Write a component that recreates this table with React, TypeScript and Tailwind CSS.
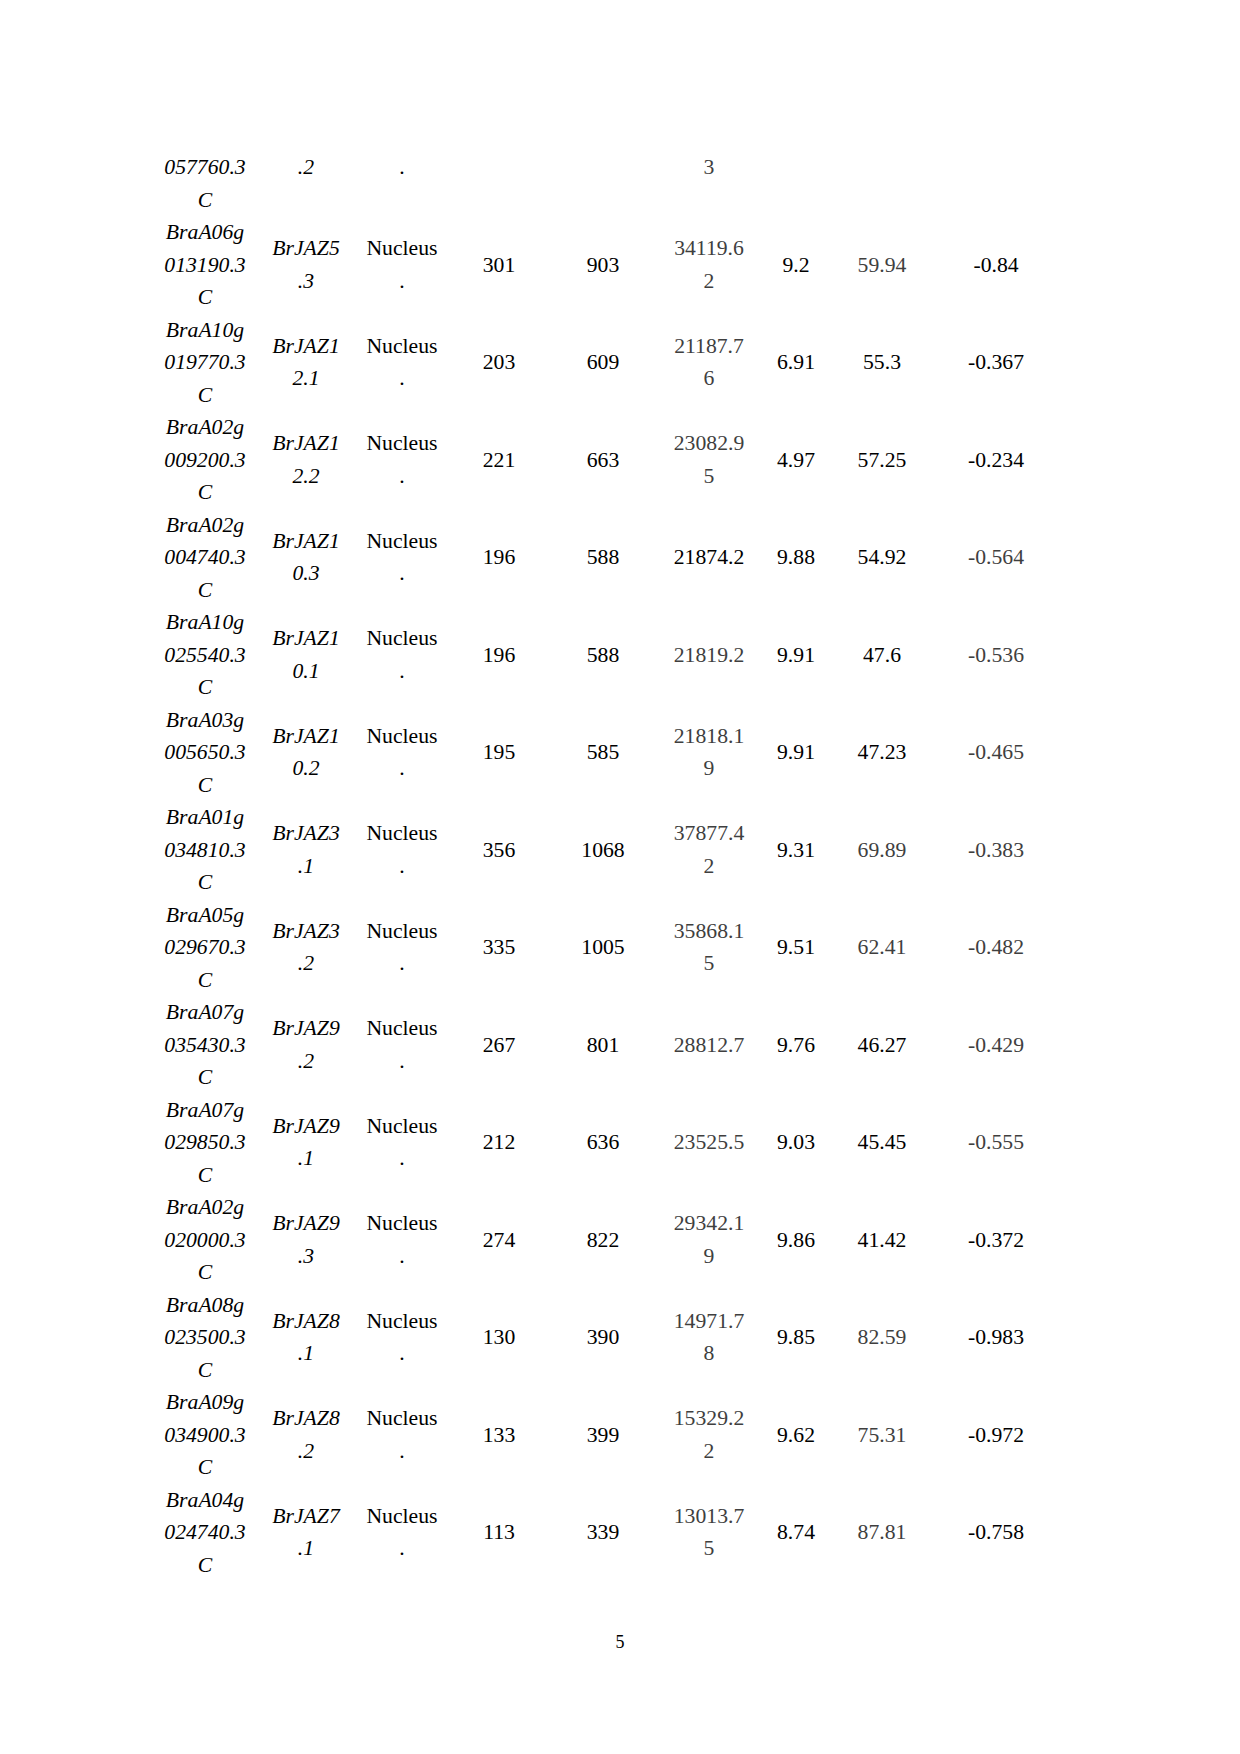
import React from 'react'

type Row = {
  id: string[]
  name: string[]
  loc: string[]
  aa: string[]
  cds: string[]
  mw: string[]
  pi: string[]
  ii: string[]
  gravy: string[]
  grayMw?: boolean
  grayIi?: boolean
  grayGravy?: boolean
}

const loc = ['Nucleus', '.']

const rows: Row[] = [
  { id: ['BraA06g', '013190.3', 'C'], name: ['BrJAZ5', '.3'], loc, aa: ['301'], cds: ['903'], mw: ['34119.6', '2'], pi: ['9.2'], ii: ['59.94'], gravy: ['-0.84'], grayMw: true, grayIi: true },
  { id: ['BraA10g', '019770.3', 'C'], name: ['BrJAZ1', '2.1'], loc, aa: ['203'], cds: ['609'], mw: ['21187.7', '6'], pi: ['6.91'], ii: ['55.3'], gravy: ['-0.367'], grayMw: true },
  { id: ['BraA02g', '009200.3', 'C'], name: ['BrJAZ1', '2.2'], loc, aa: ['221'], cds: ['663'], mw: ['23082.9', '5'], pi: ['4.97'], ii: ['57.25'], gravy: ['-0.234'], grayMw: true },
  { id: ['BraA02g', '004740.3', 'C'], name: ['BrJAZ1', '0.3'], loc, aa: ['196'], cds: ['588'], mw: ['21874.2'], pi: ['9.88'], ii: ['54.92'], gravy: ['-0.564'], grayGravy: true },
  { id: ['BraA10g', '025540.3', 'C'], name: ['BrJAZ1', '0.1'], loc, aa: ['196'], cds: ['588'], mw: ['21819.2'], pi: ['9.91'], ii: ['47.6'], gravy: ['-0.536'], grayMw: true, grayGravy: true },
  { id: ['BraA03g', '005650.3', 'C'], name: ['BrJAZ1', '0.2'], loc, aa: ['195'], cds: ['585'], mw: ['21818.1', '9'], pi: ['9.91'], ii: ['47.23'], gravy: ['-0.465'], grayMw: true, grayGravy: true },
  { id: ['BraA01g', '034810.3', 'C'], name: ['BrJAZ3', '.1'], loc, aa: ['356'], cds: ['1068'], mw: ['37877.4', '2'], pi: ['9.31'], ii: ['69.89'], gravy: ['-0.383'], grayMw: true, grayIi: true, grayGravy: true },
  { id: ['BraA05g', '029670.3', 'C'], name: ['BrJAZ3', '.2'], loc, aa: ['335'], cds: ['1005'], mw: ['35868.1', '5'], pi: ['9.51'], ii: ['62.41'], gravy: ['-0.482'], grayMw: true, grayIi: true, grayGravy: true },
  { id: ['BraA07g', '035430.3', 'C'], name: ['BrJAZ9', '.2'], loc, aa: ['267'], cds: ['801'], mw: ['28812.7'], pi: ['9.76'], ii: ['46.27'], gravy: ['-0.429'], grayMw: true, grayGravy: true },
  { id: ['BraA07g', '029850.3', 'C'], name: ['BrJAZ9', '.1'], loc, aa: ['212'], cds: ['636'], mw: ['23525.5'], pi: ['9.03'], ii: ['45.45'], gravy: ['-0.555'], grayMw: true, grayGravy: true },
  { id: ['BraA02g', '020000.3', 'C'], name: ['BrJAZ9', '.3'], loc, aa: ['274'], cds: ['822'], mw: ['29342.1', '9'], pi: ['9.86'], ii: ['41.42'], gravy: ['-0.372'], grayMw: true },
  { id: ['BraA08g', '023500.3', 'C'], name: ['BrJAZ8', '.1'], loc, aa: ['130'], cds: ['390'], mw: ['14971.7', '8'], pi: ['9.85'], ii: ['82.59'], gravy: ['-0.983'], grayMw: true, grayIi: true },
  { id: ['BraA09g', '034900.3', 'C'], name: ['BrJAZ8', '.2'], loc, aa: ['133'], cds: ['399'], mw: ['15329.2', '2'], pi: ['9.62'], ii: ['75.31'], gravy: ['-0.972'], grayMw: true, grayIi: true },
  { id: ['BraA04g', '024740.3', 'C'], name: ['BrJAZ7', '.1'], loc, aa: ['113'], cds: ['339'], mw: ['13013.7', '5'], pi: ['8.74'], ii: ['87.81'], gravy: ['-0.758'], grayMw: true, grayIi: true },
]

// column widths chosen so each cell's centre sits where the scan has it
const gridCols = 'grid grid-cols-[100px_102px_90px_104px_104px_108px_66px_106px_122px]'

function Cell({ lines, italic, gray, top }: { lines: string[]; italic?: boolean; gray?: boolean; top?: boolean }) {
  return (
    <div
      className={`flex flex-col items-center ${top ? 'justify-start' : 'justify-center'} ${italic ? 'italic' : ''} ${
        gray ? 'text-[#3f3f3f]' : 'text-black'
      }`}
    >
      {lines.map((l, i) => (
        <span key={i} className="whitespace-nowrap">
          {l}
        </span>
      ))}
    </div>
  )
}

export default function App() {
  return (
    <div className="min-h-[1754px] w-[1240px] bg-white font-['Liberation_Serif',serif] text-[21.7px] leading-[32.5px] pt-[151px]">
      <div className="ml-[155px] w-[902px]">
        {/* row continued from the previous page */}
        <div className={gridCols}>
          <Cell lines={['057760.3', 'C']} italic top />
          <Cell lines={['.2']} italic top />
          <Cell lines={['.']} top />
          <Cell lines={[]} top />
          <Cell lines={[]} top />
          <Cell lines={['3']} gray top />
          <Cell lines={[]} top />
          <Cell lines={[]} top />
          <Cell lines={[]} top />
        </div>

        {rows.map((r, i) => (
          <div key={i} className={gridCols}>
            <Cell lines={r.id} italic />
            <Cell lines={r.name} italic />
            <Cell lines={r.loc} />
            <Cell lines={r.aa} />
            <Cell lines={r.cds} />
            <Cell lines={r.mw} gray={r.grayMw} />
            <Cell lines={r.pi} />
            <Cell lines={r.ii} gray={r.grayIi} />
            <Cell lines={r.gravy} gray={r.grayGravy} />
          </div>
        ))}
      </div>

      <div className="mt-[52px] text-center text-[18px] leading-[18px] text-black">5</div>
    </div>
  )
}
